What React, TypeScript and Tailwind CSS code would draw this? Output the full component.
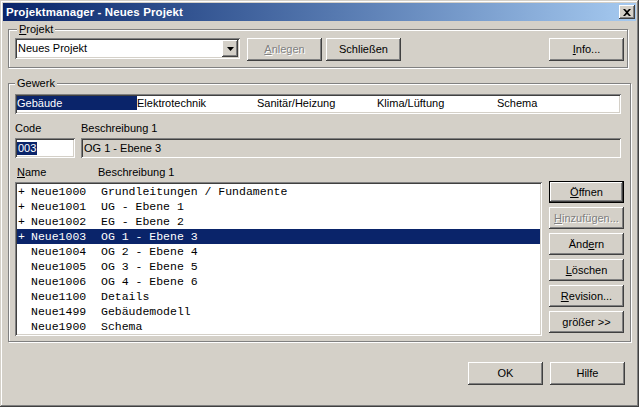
import React from "react";

const raised =
  "bg-[#d4d0c8] shadow-[inset_-1px_-1px_#404040,inset_1px_1px_#ffffff,inset_-2px_-2px_#808080]";
const sunken =
  "shadow-[inset_1px_1px_#808080,inset_-1px_-1px_#ffffff,inset_2px_2px_#404040,inset_-2px_-2px_#d4d0c8]";
const etched = "border border-[#808080] shadow-[inset_1px_1px_#ffffff,1px_1px_#ffffff]";

// label with one underlined access key
function Key({ text, at }: { text: string; at: number }) {
  if (at < 0) return <>{text}</>;
  return (
    <>
      {text.slice(0, at)}
      <span className="underline underline-offset-[1px]">{text[at]}</span>
      {text.slice(at + 1)}
    </>
  );
}

function Btn({
  text,
  at = -1,
  w = 75,
  h = 23,
  disabled = false,
  isDefault = false,
}: {
  text: string;
  at?: number;
  w?: number;
  h?: number;
  disabled?: boolean;
  isDefault?: boolean;
}) {
  return (
    <div
      style={{ width: w, height: h }}
      className={
        isDefault
          ? "border border-black shrink-0 flex"
          : "shrink-0 flex"
      }
    >
      <div
        className={
          raised +
          " flex-1 flex items-center justify-center " +
          (disabled ? "text-[#808080] [text-shadow:1px_1px_0_#ffffff]" : "text-black")
        }
      >
        <Key text={text} at={at} />
      </div>
    </div>
  );
}

const tabs = ["Gebäude", "Elektrotechnik", "Sanitär/Heizung", "Klima/Lüftung", "Schema"];

const rows = [
  { plus: true, name: "Neue1000", desc: "Grundleitungen / Fundamente" },
  { plus: true, name: "Neue1001", desc: "UG - Ebene 1" },
  { plus: true, name: "Neue1002", desc: "EG - Ebene 2" },
  { plus: true, name: "Neue1003", desc: "OG 1 - Ebene 3" },
  { plus: false, name: "Neue1004", desc: "OG 2 - Ebene 4" },
  { plus: false, name: "Neue1005", desc: "OG 3 - Ebene 5" },
  { plus: false, name: "Neue1006", desc: "OG 4 - Ebene 6" },
  { plus: false, name: "Neue1100", desc: "Details" },
  { plus: false, name: "Neue1499", desc: "Gebäudemodell" },
  { plus: false, name: "Neue1900", desc: "Schema" },
];

export default function App() {
  const selectedRow = 3;

  return (
    <div className="w-[639px] h-[407px] bg-[#d4d0c8] p-[3px] flex flex-col font-['Liberation_Sans',Arial,sans-serif] text-[11px] leading-[13px] text-black shadow-[inset_-1px_-1px_#404040,inset_1px_1px_#d4d0c8,inset_-2px_-2px_#808080,inset_2px_2px_#ffffff] overflow-hidden">
      {/* Title bar */}
      <div className="h-[18px] flex items-center pl-[3px] pr-[1px] bg-gradient-to-r from-[#0a246a] to-[#a6caf0]">
        <span className="font-bold text-white text-[11.5px] tracking-[0.1px]">
          Projektmanager - Neues Projekt
        </span>
        <div className={raised + " ml-auto w-[16px] h-[14px] flex items-center justify-center"}>
          <svg width="8" height="7" viewBox="0 0 8 7">
            <path d="M0 0h2l2 2 2-2h2L5 3.5 8 7H6L4 5 2 7H0l3-3.5z" fill="#000" />
          </svg>
        </div>
      </div>

      <div className="flex-1 flex flex-col px-[5px]">
        {/* Projekt group */}
        <fieldset className={etched + " mt-[2px] w-[620px]"}>
          <legend className="ml-[8px] px-[2px] bg-[#d4d0c8] leading-[13px]">
            <Key text="Projekt" at={0} />
          </legend>
          <div className="flex items-start pl-[6px] pr-[3px] pt-[2px] pb-[6px]">
            <div className={"w-[225px] h-[21px] bg-white flex items-center p-[2px] " + sunken}>
              <span className="flex-1 pl-[1px]">Neues Projekt</span>
              <div className={raised + " w-[16px] h-[17px] flex items-center justify-center"}>
                <svg width="7" height="4" viewBox="0 0 7 4">
                  <path d="M0 0h7L3.5 4z" fill="#000" />
                </svg>
              </div>
            </div>
            <div className="ml-[7px]">
              <Btn text="Anlegen" at={0} disabled />
            </div>
            <div className="ml-[4px]">
              <Btn text="Schließen" />
            </div>
            <div className="ml-auto">
              <Btn text="Info..." at={0} />
            </div>
          </div>
        </fieldset>

        {/* Gewerk group */}
        <fieldset className={etched + " mt-[9px] w-[620px]"}>
          <legend className="ml-[6px] px-[2px] bg-[#d4d0c8] leading-[13px]">Gewerk</legend>
          <div className="flex flex-col pl-[6px] pr-[6px] pt-[4px] pb-[5px]">
            {/* Gewerk selector */}
            <div className={"w-[606px] h-[20px] bg-white flex items-start p-[2px] " + sunken}>
              {tabs.map((t, i) => (
                <div
                  key={t}
                  className={
                    "w-[120px] h-[14px] leading-[14px] " +
                    (i === 0 ? "bg-[#0a246a] text-white" : "")
                  }
                >
                  {t}
                </div>
              ))}
            </div>

            {/* Code / description */}
            <div className="flex mt-[8px]">
              <span className="w-[66px]">Code</span>
              <span>Beschreibung 1</span>
            </div>
            <div className="flex mt-[3px] gap-[6px]">
              <div className={"w-[60px] h-[20px] bg-white flex items-center px-[2px] " + sunken}>
                <span className="bg-[#0a246a] text-white px-[1px] leading-[13px]">003</span>
              </div>
              <div className={"w-[540px] h-[20px] bg-[#d4d0c8] flex items-center px-[3px] " + sunken}>
                OG 1 - Ebene 3
              </div>
            </div>

            {/* List header */}
            <div className="flex mt-[8px] pl-[2px]">
              <span className="w-[81px]">
                <Key text="Name" at={0} />
              </span>
              <span>Beschreibung 1</span>
            </div>

            <div className="flex items-start mt-[3px]">
              <div className={"w-[527px] h-[154px] bg-white p-[2px] overflow-hidden " + sunken}>
                {rows.map((r, i) => (
                  <div
                    key={r.name}
                    className={
                      "h-[15px] flex items-center font-['Liberation_Mono','Courier_New',monospace] text-[11.5px] " +
                      (i === selectedRow ? "bg-[#0a246a] text-white" : "text-black")
                    }
                  >
                    <span className="w-[14px] pl-[1px]">{r.plus ? "+" : ""}</span>
                    <span className="w-[70px]">{r.name}</span>
                    <span>{r.desc}</span>
                  </div>
                ))}
              </div>

              <div className="ml-[7px] -mt-[1px] flex flex-col gap-[4px]">
                <Btn text="Öffnen" at={0} h={22} isDefault />
                <Btn text="Hinzufügen..." at={0} h={22} disabled />
                <Btn text="Ändern" at={3} h={22} />
                <Btn text="Löschen" at={0} h={22} />
                <Btn text="Revision..." at={0} h={22} />
                <Btn text="größer >>" at={0} h={22} />
              </div>
            </div>
          </div>
        </fieldset>

        {/* Dialog buttons */}
        <div className="flex justify-end gap-[7px] mt-[20px] pr-[6px]">
          <Btn text="OK" />
          <Btn text="Hilfe" />
        </div>
      </div>
    </div>
  );
}
